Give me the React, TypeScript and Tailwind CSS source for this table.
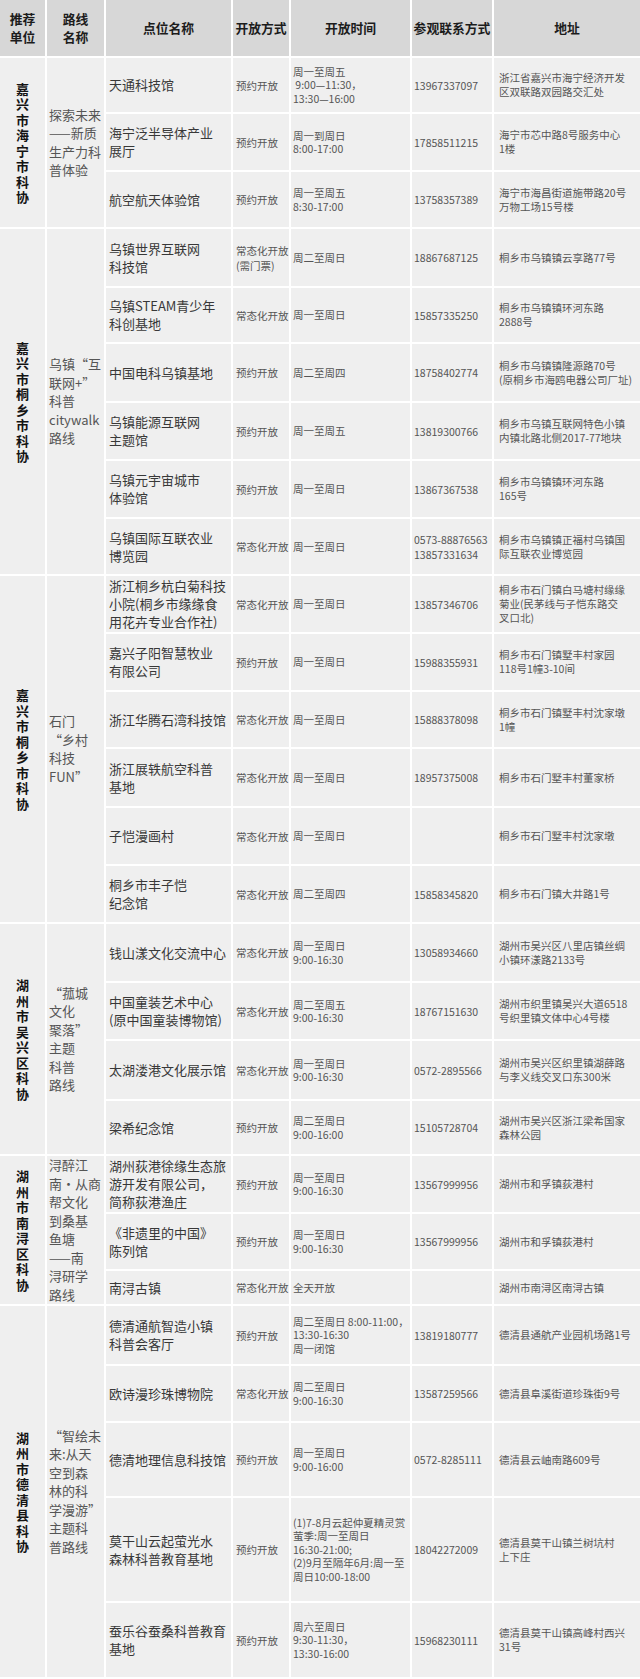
import { Fragment } from "react";

type Row = [string, string, string, string, string];

interface Group {
  unit: string;
  route: string;
  span: string;
  rows: Row[];
}

const HEADERS = ["推荐\n单位", "路线\n名称", "点位名称", "开放方式", "开放时间", "参观联系方式", "地址"];

const GROUPS: Group[] = [
  {
    unit: "嘉兴市海宁市科协",
    route: "探索未来\n——新质\n生产力科\n普体验",
    span: "row-span-3",
    rows: [
      ["天通科技馆", "预约开放", "周一至周五\n 9:00—11:30，\n13:30—16:00", "13967337097", "浙江省嘉兴市海宁经济开发\n区双联路双园路交汇处"],
      ["海宁泛半导体产业\n展厅", "预约开放", "周一到周日\n8:00-17:00", "17858511215", "海宁市芯中路8号服务中心\n1楼"],
      ["航空航天体验馆", "预约开放", "周一至周五\n8:30-17:00", "13758357389", "海宁市海昌街道施带路20号\n万物工场15号楼"],
    ],
  },
  {
    unit: "嘉兴市桐乡市科协",
    route: "乌镇“互\n联网+”\n科普\ncitywalk\n路线",
    span: "row-span-6",
    rows: [
      ["乌镇世界互联网\n科技馆", "常态化开放\n(需门票)", "周二至周日", "18867687125", "桐乡市乌镇镇云享路77号"],
      ["乌镇STEAM青少年\n科创基地", "常态化开放", "周一至周日", "15857335250", "桐乡市乌镇镇环河东路\n2888号"],
      ["中国电科乌镇基地", "预约开放", "周二至周四", "18758402774", "桐乡市乌镇镇隆源路70号\n(原桐乡市海鸥电器公司厂址)"],
      ["乌镇能源互联网\n主题馆", "预约开放", "周一至周五", "13819300766", "桐乡市乌镇互联网特色小镇\n内镇北路北侧2017-77地块"],
      ["乌镇元宇宙城市\n体验馆", "预约开放", "周一至周日", "13867367538", "桐乡市乌镇镇环河东路\n165号"],
      ["乌镇国际互联农业\n博览园", "常态化开放", "周一至周日", "0573-88876563\n13857331634", "桐乡市乌镇镇正福村乌镇国\n际互联农业博览园"],
    ],
  },
  {
    unit: "嘉兴市桐乡市科协",
    route: "石门\n“乡村\n科技\nFUN”",
    span: "row-span-6",
    rows: [
      ["浙江桐乡杭白菊科技\n小院(桐乡市缘缘食\n用花卉专业合作社)", "常态化开放", "周一至周日", "13857346706", "桐乡市石门镇白马塘村缘缘\n菊业(民茅线与子恺东路交\n叉口北)"],
      ["嘉兴子阳智慧牧业\n有限公司", "预约开放", "周一至周日", "15988355931", "桐乡市石门镇墅丰村家园\n118号1幢3-10间"],
      ["浙江华腾石湾科技馆", "常态化开放", "周一至周日", "15888378098", "桐乡市石门镇墅丰村沈家墩\n1幢"],
      ["浙江展轶航空科普\n基地", "常态化开放", "周一至周日", "18957375008", "桐乡市石门墅丰村董家桥"],
      ["子恺漫画村", "常态化开放", "周一至周日", "", "桐乡市石门墅丰村沈家墩"],
      ["桐乡市丰子恺\n纪念馆", "常态化开放", "周二至周四", "15858345820", "桐乡市石门镇大井路1号"],
    ],
  },
  {
    unit: "湖州市吴兴区科协",
    route: "“菰城\n文化\n聚落”\n主题\n科普\n路线",
    span: "row-span-4",
    rows: [
      ["钱山漾文化交流中心", "常态化开放", "周一至周日\n9:00-16:30", "13058934660", "湖州市吴兴区八里店镇丝绸\n小镇环漾路2133号"],
      ["中国童装艺术中心\n(原中国童装博物馆)", "常态化开放", "周二至周五\n9:00-16:30", "18767151630", "湖州市织里镇吴兴大道6518\n号织里镇文体中心4号楼"],
      ["太湖溇港文化展示馆", "常态化开放", "周一至周日\n9:00-16:30", "0572-2895566", "湖州市吴兴区织里镇湖薛路\n与李义线交叉口东300米"],
      ["梁希纪念馆", "预约开放", "周二至周日\n9:00-16:00", "15105728704", "湖州市吴兴区浙江梁希国家\n森林公园"],
    ],
  },
  {
    unit: "湖州市南浔区科协",
    route: "浔醉江\n南·从商\n帮文化\n到桑基\n鱼塘\n——南\n浔研学\n路线",
    span: "row-span-3",
    rows: [
      ["湖州荻港徐缘生态旅\n游开发有限公司，\n简称荻港渔庄", "预约开放", "周一至周日\n9:00-16:30", "13567999956", "湖州市和孚镇荻港村"],
      ["《非遗里的中国》\n陈列馆", "预约开放", "周一至周日\n9:00-16:30", "13567999956", "湖州市和孚镇荻港村"],
      ["南浔古镇", "常态化开放", "全天开放", "", "湖州市南浔区南浔古镇"],
    ],
  },
  {
    unit: "湖州市德清县科协",
    route: "“智绘未\n来:从天\n空到森\n林的科\n学漫游”\n主题科\n普路线",
    span: "row-span-5",
    rows: [
      ["德清通航智造小镇\n科普会客厅", "预约开放", "周二至周日 8:00-11:00，\n13:30-16:30\n周一闭馆", "13819180777", "德清县通航产业园机场路1号"],
      ["欧诗漫珍珠博物院", "常态化开放", "周二至周日\n9:00-16:30", "13587259566", "德清县阜溪街道珍珠街9号"],
      ["德清地理信息科技馆", "预约开放", "周一至周日\n9:00-16:00", "0572-8285111", "德清县云岫南路609号"],
      ["莫干山云起萤光水\n森林科普教育基地", "预约开放", "(1)7-8月云起仲夏精灵赏\n萤季:周一至周日\n16:30-21:00;\n(2)9月至隔年6月:周一至\n周日10:00-18:00", "18042272009", "德清县莫干山镇兰树坑村\n上下庄"],
      ["蚕乐谷蚕桑科普教育\n基地", "预约开放", "周六至周日\n9:30-11:30，\n13:30-16:00", "15968230111", "德清县莫干山镇高峰村西兴\n31号"],
    ],
  },
];

const cell = "bg-[#efefef] flex items-center whitespace-pre";

export default function App() {
  return (
    <div className="w-[640px] bg-white pb-[2px] font-['Noto_Sans_CJK_SC','Noto_Sans',sans-serif]">
      <div className="grid grid-cols-[45px_57px_125px_56px_119px_80px_146px] grid-rows-[56px_54px_56px_55px_57px_54px_57px_56px_56px_55px_56px_56px_55px_57px_56px_56px_57px_56px_58px_53px_56px_55px_33px_58px_55px_73px_103px_74px] gap-[2px]">
        {HEADERS.map((h) => (
          <div
            key={h}
            className="bg-[#d7d7d7] flex items-center justify-center text-center whitespace-pre font-bold text-[12.8px] leading-[18px] text-[#1c1c1c]"
          >
            {h}
          </div>
        ))}
        {GROUPS.map((g, gi) => (
          <Fragment key={gi}>
            <div className={`${g.span} bg-[#efefef] flex items-center justify-center`}>
              <p className="w-[13px] break-all text-center font-bold text-[13px] leading-[15.5px] text-[#141414]">
                {g.unit}
              </p>
            </div>
            <div className={`${g.span} ${cell} pl-[2px] text-[13px] leading-[18.5px] text-[#555555]`}>
              {g.route}
            </div>
            {g.rows.map((r, ri) => (
              <Fragment key={ri}>
                <div className={`${cell} pl-[3px] text-[13px] leading-[18px] text-[#383838]`}>{r[0]}</div>
                <div className={`${cell} pl-[3px] text-[10.5px] leading-[15px] text-[#555555]`}>{r[1]}</div>
                <div className={`${cell} pl-[2px] text-[10.5px] leading-[13.5px] text-[#555555]`}>{r[2]}</div>
                <div className={`${cell} pl-[2px] text-[10.5px] leading-[15px] text-[#555555]`}>{r[3]}</div>
                <div className={`${cell} pl-[5px] text-[10.5px] leading-[14px] text-[#555555]`}>{r[4]}</div>
              </Fragment>
            ))}
          </Fragment>
        ))}
      </div>
    </div>
  );
}
